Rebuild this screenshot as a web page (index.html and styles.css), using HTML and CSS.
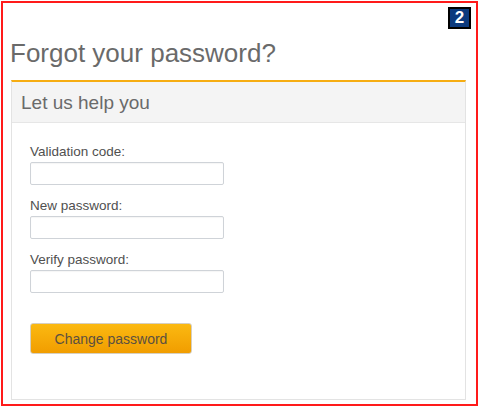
FILE: index.html
```html
<!DOCTYPE html>
<html>
<head>
<meta charset="utf-8">
<link rel="stylesheet" href="styles.css">
</head>
<body>
<div class="frame">
  <span class="badge">2</span>
  <h1 class="title">Forgot your password?</h1>
  <div class="panel">
    <div class="panel-head">Let us help you</div>
    <form class="panel-body">
      <div class="field">
        <label class="label">Validation code:</label>
        <input class="input" type="text">
      </div>
      <div class="field">
        <label class="label">New password:</label>
        <input class="input" type="password">
      </div>
      <div class="field">
        <label class="label">Verify password:</label>
        <input class="input" type="password">
      </div>
      <button class="btn" type="button">Change password</button>
    </form>
  </div>
</div>
</body>
</html>
```
FILE: styles.css
```css
html, body {
  margin: 0;
  padding: 0;
  background: #fff;
}
body {
  font-family: Arial, "Liberation Sans", sans-serif;
}
.frame {
  position: relative;
  box-sizing: border-box;
  margin: 1px 0 0 1px;
  width: 477px;
  height: 405px;
  border: 2px solid #ff1a1a;
  padding: 35px 10px 0 8px;
}
.badge {
  position: absolute;
  top: 4px;
  right: 5px;
  box-sizing: border-box;
  width: 23px;
  height: 22px;
  background: #0b3a7e;
  border: 2px solid #000;
  color: #fff;
  font-weight: bold;
  font-size: 17px;
  line-height: 18px;
  text-align: center;
}
.title {
  margin: 0 0 12px -1px;
  font-size: 26px;
  line-height: 30px;
  font-weight: normal;
  color: #6a6a6a;
}
.panel {
  border: 1px solid #e3e3e3;
  border-top: 2px solid #f6ad12;
}
.panel-head {
  background: #f4f4f4;
  border-bottom: 1px solid #e6e6e6;
  padding: 10px 9px 8px;
  font-size: 19px;
  line-height: 22px;
  color: #6a6a6a;
}
.panel-body {
  display: flex;
  flex-direction: column;
  align-items: flex-start;
  padding: 21px 18px 45px;
  margin: 0;
}
.field {
  display: flex;
  flex-direction: column;
  margin-bottom: 13px;
}
.field:nth-child(3) {
  margin-bottom: 30px;
}
.label {
  font-size: 13.5px;
  line-height: 16px;
  color: #505050;
  margin-bottom: 2px;
}
.input {
  box-sizing: border-box;
  width: 194px;
  height: 23px;
  margin: 0;
  border: 1px solid #cfd3d8;
  border-radius: 2px;
  background: #fff;
  box-shadow: inset 0 1px 1px rgba(0,0,0,0.04);
}
.btn {
  box-sizing: border-box;
  width: 162px;
  height: 31px;
  margin: 0;
  padding: 0;
  border: 1px solid #d6cfc0;
  border-radius: 3px;
  background: linear-gradient(#fbb911, #f19d00);
  font-family: Arial, "Liberation Sans", sans-serif;
  font-size: 14px;
  color: #5b5040;
}
```
